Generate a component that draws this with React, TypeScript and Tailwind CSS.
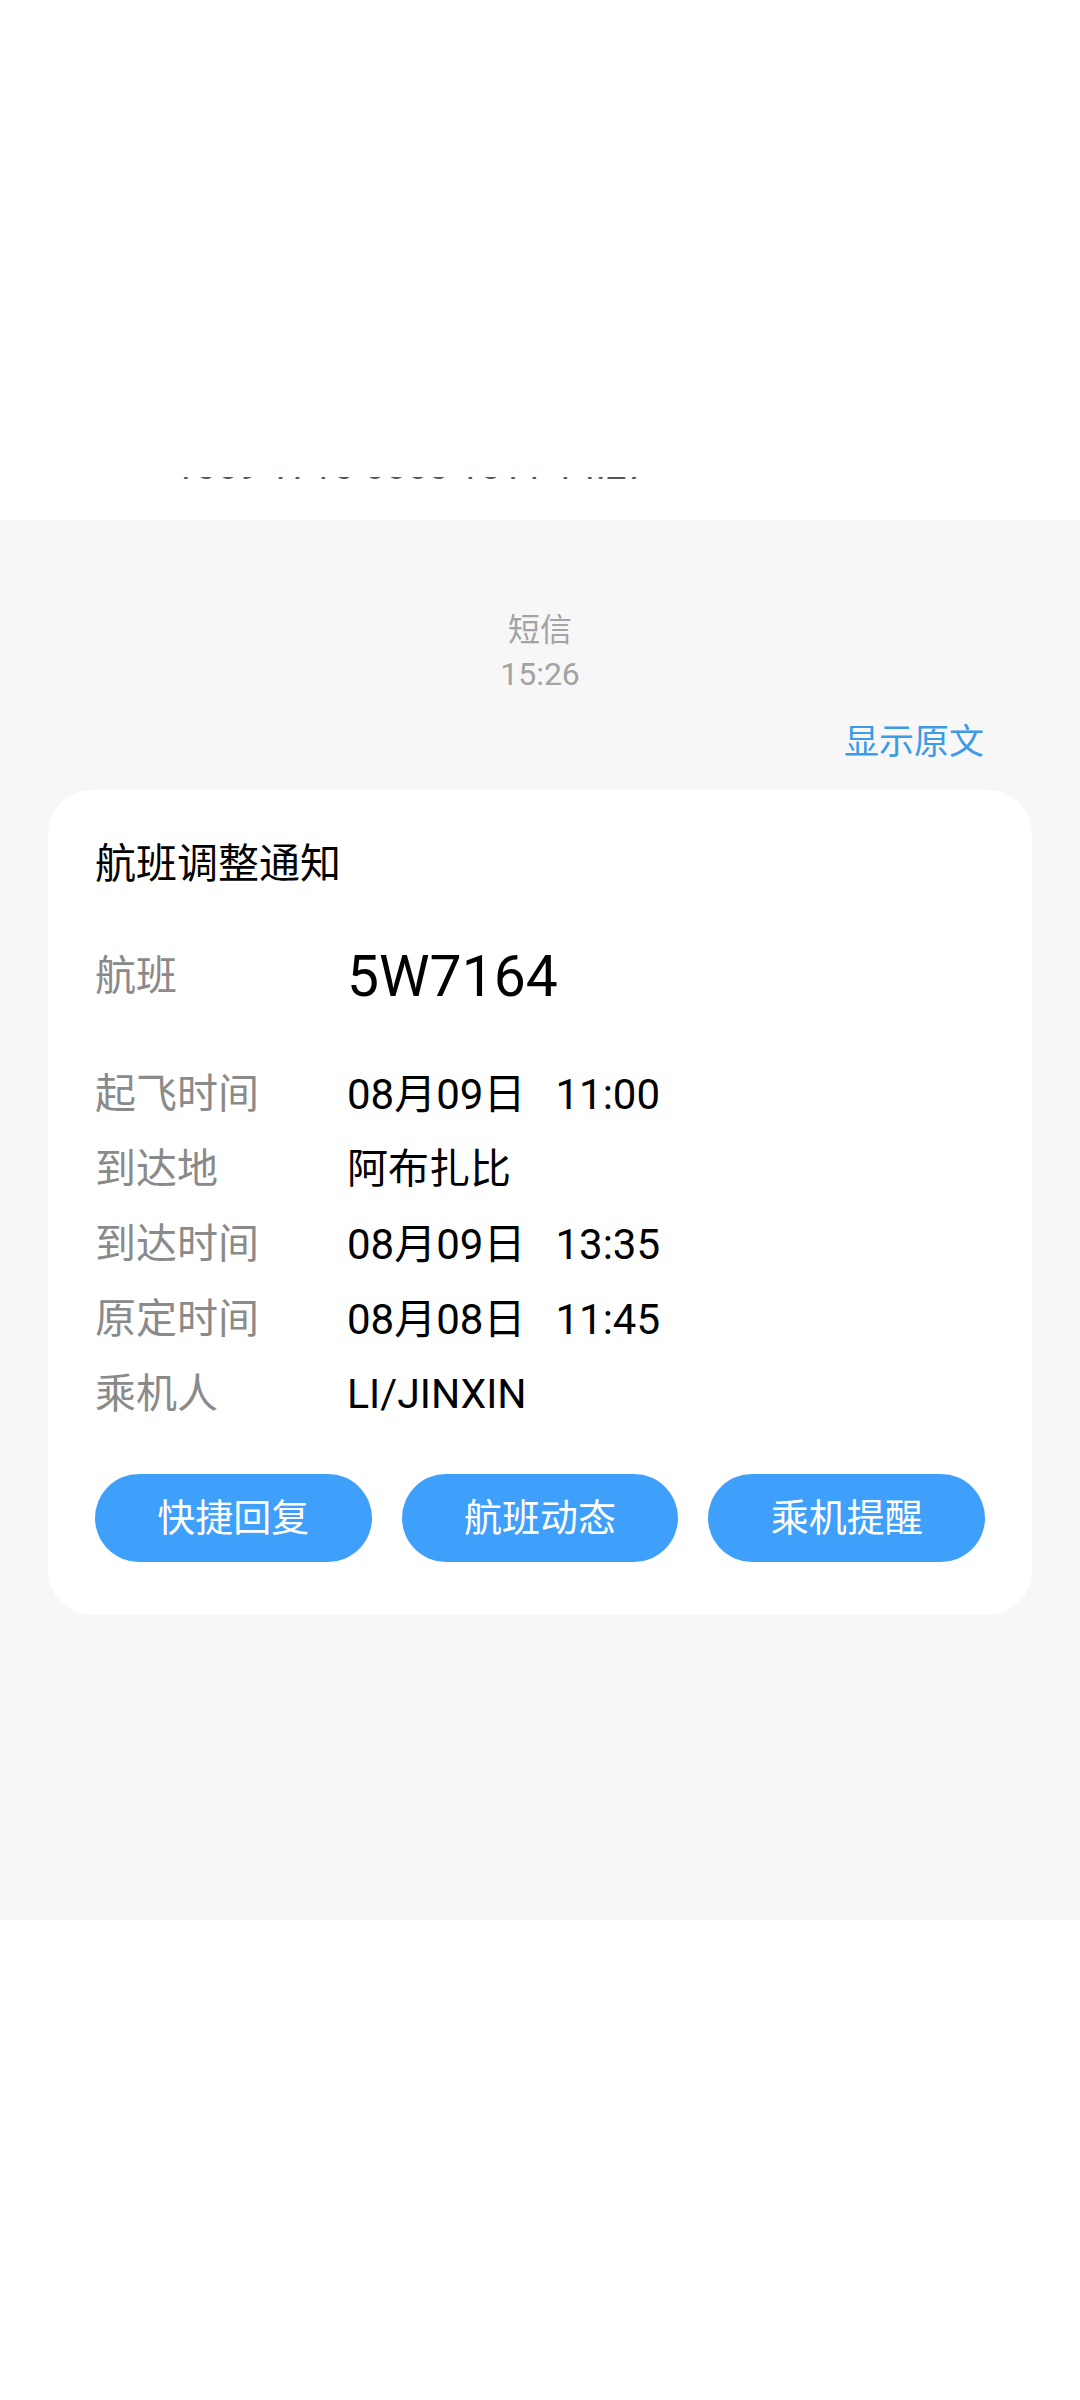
const font = "font-['Roboto','Noto_Sans_CJK_SC',sans-serif]";

type Row = { label: string; date?: string; time?: string; text?: string };

const rows: Row[] = [
  { label: "起飞时间", date: "08月09日", time: "11:00" },
  { label: "到达地", text: "阿布扎比" },
  { label: "到达时间", date: "08月09日", time: "13:35" },
  { label: "原定时间", date: "08月08日", time: "11:45" },
  { label: "乘机人", text: "LI/JINXIN" },
];

const actions = ["快捷回复", "航班动态", "乘机提醒"];

function InfoRow({ row }: { row: Row }) {
  return (
    <div className="flex h-[75px] items-center">
      <span className="w-[252px] shrink-0 text-[41px] text-[#8a8a8a]">{row.label}</span>
      {row.text ? (
        <span className="text-[41px] text-black">{row.text}</span>
      ) : (
        <span className="flex text-[42px] text-black">
          <span>{row.date}</span>
          <span className="ml-[30px]">{row.time}</span>
        </span>
      )}
    </div>
  );
}

export default function App() {
  return (
    <div className={`flex h-[2400px] w-full flex-col bg-white ${font}`}>
      {/* previous message, scrolled almost out of view */}
      <div className="h-[520px] shrink-0">
        <div className="ml-[174px] mt-[477px] flex h-[2px] items-end overflow-hidden">
          <span className="-mb-[6px] whitespace-nowrap text-[38px] leading-[38px] text-[#555]">
            1069 1710 6660 1811 14:27
          </span>
        </div>
      </div>

      <div className="flex h-[1400px] shrink-0 flex-col bg-[#f7f7f7]">
        <div className="flex flex-col items-center pt-[88px] text-[32px] leading-[44px] text-[#a3a3a3]">
          <span>短信</span>
          <span>15:26</span>
        </div>

        <div className="mt-[25px] flex justify-end pr-[96px]">
          <span className="text-[35px] leading-[44px] text-[#3c9be8]">显示原文</span>
        </div>

        <div className="mx-12 mt-[25px] rounded-[44px] bg-white px-[47px] pb-[53px] pt-[46px]">
          <h1 className="text-[41px] leading-[56px] text-black">航班调整通知</h1>

          <div className="mt-[53px] flex h-[64px] items-center">
            <span className="w-[252px] shrink-0 text-[41px] text-[#8a8a8a]">航班</span>
            <span className="text-[57px] text-black">5W7164</span>
          </div>

          <div className="mt-[48px] flex flex-col">
            {rows.map((row) => (
              <InfoRow key={row.label} row={row} />
            ))}
          </div>

          <div className="mt-[42px] grid grid-cols-3 gap-[30px]">
            {actions.map((label) => (
              <button
                key={label}
                className="flex h-[88px] items-center justify-center rounded-full bg-[#3fa0fc] text-[38px] text-white"
              >
                {label}
              </button>
            ))}
          </div>
        </div>
      </div>

      <div className="flex-1 bg-white" />
    </div>
  );
}
